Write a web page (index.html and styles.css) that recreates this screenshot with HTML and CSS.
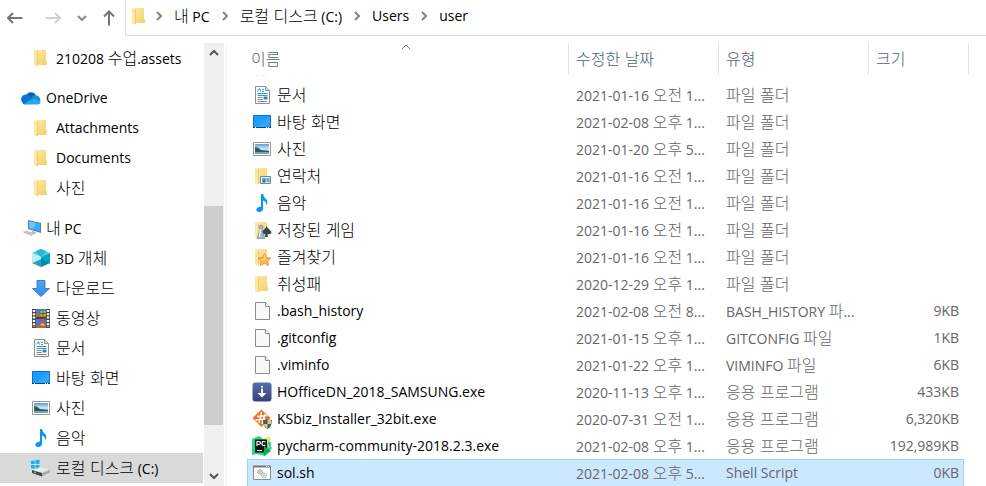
FILE: index.html
```html
<!DOCTYPE html>
<html lang="ko">
<head>
<meta charset="utf-8">
<title>user</title>
<link rel="stylesheet" href="styles.css">
</head>
<body>
<svg class="sprite" aria-hidden="true">
  <defs>
    <linearGradient id="gold" x1="0" x2="1" y1="0" y2="1"><stop offset="0" stop-color="#ffe9a6"/><stop offset="1" stop-color="#f3cf66"/></linearGradient>
    <linearGradient id="sky" x1="0" x2="0" y1="0" y2="1"><stop offset="0" stop-color="#5b9be0"/><stop offset=".5" stop-color="#d4ebf6"/><stop offset="1" stop-color="#4a8a9a"/></linearGradient>
    <linearGradient id="display" x1="0" x2="1" y1="0" y2="1"><stop offset="0" stop-color="#149cff"/><stop offset=".5" stop-color="#1c9ffc"/><stop offset=".7" stop-color="#35acff"/><stop offset="1" stop-color="#1794f4"/></linearGradient>
    <linearGradient id="arrow" x1="0" x2="0" y1="0" y2="1"><stop offset="0" stop-color="#4ba3f0"/><stop offset="1" stop-color="#2f8fe6"/></linearGradient>
    <linearGradient id="navy" x1="0" x2="0" y1="0" y2="1"><stop offset="0" stop-color="#5a6cab"/><stop offset="1" stop-color="#34437f"/></linearGradient>
  </defs>
  <symbol id="folder" viewBox="0 0 20 20">
    <path d="M5 2h10v10.500l.8.500V17H5z" fill="url(#gold)"/>
    <path d="M3 2l4 1.500v13L6.500 19 3 17z" fill="#ffe79c"/>
    <path d="M6.500 3.500V18" stroke="#e9c667" stroke-width=".8"/>
  </symbol>
  <symbol id="cloud" viewBox="0 0 20 20">
    <path d="M5 8a5.500 5.500 0 0 1 10-1l-4 6-8-2z" fill="#0364b8"/>
    <path d="M12 8a5 5 0 0 1 7.500 5l-4 2-6-3z" fill="#1490df"/>
    <path d="M1 14a4.500 4.500 0 0 1 8-5.500l4 2.500-8 5.500a4 4 0 0 1-4-2.500z" fill="#0078d4"/>
    <path d="M3 16l8-5a8 8 0 0 1 3-.5l5.700 3.500a3 3 0 0 1-2.700 2.500H5a5 5 0 0 1-2-.5z" fill="#28a8ea"/>
  </symbol>
  <symbol id="pc" viewBox="0 0 20 20">
    <path d="M7 2l13 3v10L7 11z" fill="#607b8d"/>
    <path d="M8 3.300l11 2.500v7.700L8 10z" fill="#33adff"/>
    <path d="M8 3.300l7 1.600-3 6.300L8 10z" fill="#69c5ff"/>
    <path d="M11 13l4 1v2l-4-1z" fill="#aab4ba"/>
    <path d="M1 14l3-1.500 11 3-4 2.500z" fill="#d2d6da"/>
    <path d="M3 14.500l8 2.300M5 13.500l8 2.300" stroke="#a7adb3" stroke-width=".7"/>
  </symbol>
  <symbol id="cube" viewBox="0 0 20 20">
    <path d="M1 5l9-4 9 4-9 4z" fill="#48cde2"/>
    <path d="M1 5l9 4v10l-9-4z" fill="#9be5ec"/>
    <path d="M10 9l9-4v10l-9 4z" fill="#00a6c7"/>
    <path d="M1 15l9-4 9 4-9 4z" fill="#067f9d" opacity=".7"/>
    <path d="M1 5l9 4v2l-9 4z" fill="#b9f0f3"/>
    <path d="M5 3l5-2 5 2-5 6z" fill="#25b7d2"/>
  </symbol>
  <symbol id="download" viewBox="0 0 20 20">
    <path d="M6 2.500h8v8h4.500L10 18.500 1.500 10.500H6z" fill="url(#arrow)" stroke="#2c78c4" stroke-width=".9"/>
  </symbol>
  <symbol id="video" viewBox="0 0 20 20">
    <path d="M1 1h18v19H1z" fill="#444"/>
    <path d="M5 1h10v8H5zM5 11h10v9H5z" fill="#4279d8"/>
    <path d="M5 6l3-1 2 2h5v2H5zM5 17l4-1 2 1 4-2v5H5z" fill="#b96344"/>
    <circle cx="12" cy="5.500" r="3" fill="#e1bc25"/><path d="M9 5.500h6M12 2.500v6" stroke="#35833a" stroke-width="1.300"/>
    <circle cx="12" cy="12.500" r="2" fill="#e04c31"/><path d="M9 17q3-4 5 1z" fill="#e6cc38"/>
    <path d="M3 2v17M17 2v17" stroke="#fff" stroke-width="2.400" stroke-dasharray="2 1.300"/>
  </symbol>
  <symbol id="doc" viewBox="0 0 20 20">
    <path d="M3.500 1.500h10l4 4v13h-14z" fill="#fff" stroke="#8a8f93"/>
    <path d="M13.500 1.500v4h4" fill="#ddd" stroke="#8a8f93"/>
    <path d="M5.500 6.500l2-3 1 3M10 4.500h2M10 6.500h2M5.500 8.500h10M5.500 10.500h10" stroke="#249bdc" fill="none"/>
    <path d="M5.500 12.500h5M5.500 14.500h5M5.500 16.500h10" stroke="#888"/>
    <path d="M11.500 11.500h4v3h-4z" fill="#3a83ba"/>
  </symbol>
  <symbol id="desktop" viewBox="0 0 20 20">
    <path d="M1.500 3.500h17v12h-17z" fill="url(#display)" stroke="#1473b8"/>
    <path d="M1 15.500h18" stroke="#064a83"/>
    <path d="M3 15.500h1M14 15.500h1M16 15.500h1" stroke="#fff"/>
  </symbol>
  <symbol id="photo" viewBox="0 0 20 20">
    <path d="M1.500 3.500h17v13h-17z" fill="#fff" stroke="#999"/>
    <path d="M3 5h14v10H3z" fill="url(#sky)"/>
    <path d="M3 8q3 0 6 3l8 1v1H3z" fill="#315b55"/>
    <path d="M3 13h14v2H3z" fill="#6fa8bd"/>
  </symbol>
  <symbol id="note" viewBox="0 0 20 20">
    <path d="M9 1h2q.500 3 3 5 2.500 2.500.300 6.500.5-4-3.300-5v8.500q-.3 2.500-3.500 3-3 .2-3.200-2 0-3 4.700-3.500z" fill="#0a94f5"/>
  </symbol>
  <symbol id="drive" viewBox="0 0 20 20">
    <path d="M0 3l3.700-.6v3.700H0zM4.500 2.300L8.500 1.700v4.400h-4zM0 7h3.700v3.700L0 10.200zM4.500 7h4v4.500l-4-.7z" fill="#12b4ee"/>
    <path d="M1 12l8-3 10 2.500-8 3.500z" fill="#e7e9ea"/>
    <path d="M1 12l10 3v3.500L1 15z" fill="#3f4548"/>
    <path d="M11 15l8-3.500v3l-8 4z" fill="#a9adaf"/>
    <path d="M3 14l2 .6" stroke="#50e345" stroke-width="1.500"/>
  </symbol>
  <symbol id="contacts" viewBox="0 0 20 20">
    <use href="#folder"/>
    <path d="M8.500 10.500h10v7h-10z" fill="#d9f1fa" stroke="#5793b2"/>
    <path d="M10.500 12h3v4.500h-3z" fill="#287695"/><circle cx="12" cy="13" r="1" fill="#c68c64"/>
    <path d="M14.500 13h3M14.500 15h3" stroke="#334e5e"/>
  </symbol>
  <symbol id="games" viewBox="0 0 20 20">
    <use href="#folder"/>
    <path d="M14.500 6q.5 1.500 3 3.500 2.500 2 1.500 4-1.500 1.500-3.500.3L16 17h-3l.5-3.200q-3 1-3.500-1.300 0-1.500 2-3 2-1.500 2.500-3.500z" fill="#3c4348"/>
    <path d="M7.500 8.500a2 2 0 1 1 3 0l-.3 2 1.800 5.500 1 2.500H5l1-2.500 2-5.500z" fill="#98bad0" stroke="#5c7d94" stroke-width=".6"/>
    <path d="M8.500 9l-1 8" stroke="#e8f6ff" stroke-width="1.400"/>
  </symbol>
  <symbol id="favorites" viewBox="0 0 20 20">
    <use href="#folder"/>
    <path d="M12.500 6.500l1.800 4 4.700.6-3.400 3 1 4.500-4.100-2.300-4.200 2.300 1-4.500-3.400-3 4.700-.6z" fill="#ffb84b" stroke="#e58b25" stroke-width=".8"/>
    <path d="M12.500 8l.6 4-4.600 1" stroke="#ffe0a0" fill="none"/>
  </symbol>
  <symbol id="file" viewBox="0 0 20 20">
    <path d="M3.500 1.500h10l4 4v13h-14z" fill="#f8f8f8" stroke="#8b8b8b"/>
    <path d="M13.500 1.500v4h4" fill="#fff" stroke="#8b8b8b"/>
  </symbol>
  <symbol id="hoffice" viewBox="0 0 20 20">
    <rect x=".5" y=".5" width="19" height="19" rx="3" fill="url(#navy)"/>
    <path d="M9 4h2v1.500H9zM9 6.500h2V11h3.500L10 15.500 5.500 11H9z" fill="#fff"/>
  </symbol>
  <symbol id="ksbiz" viewBox="0 0 20 20">
    <path d="M9.500.5l9 8.500-9 9-9-9z" fill="#f37021"/>
    <path d="M9.500 3L7 14M13 5l-3 10M5 7.500l10-1M3.500 11l10-1" stroke="#fff" stroke-width="1.300"/>
    <path d="M11 11q3 0 4.500-1.500Q17 11 20 11q0 7-4.500 9Q11 18 11 11z" fill="#24639b"/>
    <path d="M15.500 10Q17 11 19.500 11.500v3.500h-4zM11.500 15h4v4.500q-3-1-4-4.500z" fill="#f8c63d"/>
  </symbol>
  <symbol id="pycharm" viewBox="0 0 20 20">
    <path d="M0 3l7-3 4 3 7-1-1 6 3 4-7 8-8-2-5 1z" fill="#21d789"/>
    <path d="M13 2l4-2 1 6 2 2-3 4z" fill="#fce94f"/><path d="M15 5l4 2-1 5z" fill="#07c3d9"/>
    <path d="M3 3.500h12v13H3z" fill="#111"/>
    <path d="M5 10V5.500h1.500q2 0 2 1.400T6.500 8.500H5M13.500 6q-3.500-1.500-3.500 1.500t3.500 1.500M5 14.500h5" fill="none" stroke="#fff" stroke-width="1.200"/>
    <path d="M12 10l7 5-7 5z" fill="#12a94b"/>
  </symbol>
  <symbol id="script" viewBox="0 0 20 20">
    <path d="M1.500 3.500h17v13h-17z" fill="#fff" stroke="#858b90"/>
    <path d="M1 3.500h18" stroke="#777" stroke-width="2"/><path d="M14 3.500h1M16 3.500h1" stroke="#fff"/>
    <circle cx="8" cy="9" r="2.300" fill="#eee" stroke="#777" stroke-dasharray="1 .4"/><circle cx="8" cy="9" r=".7" fill="#777"/>
    <circle cx="12" cy="12.500" r="2.300" fill="#eaf5fa" stroke="#6c9bb0" stroke-dasharray="1 .4"/><circle cx="12" cy="12.500" r=".7" fill="#6c9bb0"/>
  </symbol>
</svg>

<header class="toolbar">
  <div class="history">
    <button aria-label="뒤로"><svg width="16" height="12" viewBox="0 0 16 12"><path d="M15.500 6H1M6 1L1 6l5 5"/></svg></button>
    <button aria-label="앞으로" disabled><svg width="16" height="12" viewBox="0 0 16 12"><path d="M.5 6H15M10 1l5 5-5 5"/></svg></button>
    <button class="recent" aria-label="최근 위치"><svg width="10" height="6" viewBox="0 0 10 6"><path d="M1 1l4 4 4-4"/></svg></button>
    <button aria-label="위로"><svg width="12" height="16" viewBox="0 0 12 16"><path d="M6 15.500V1.500M1 6.500l5-5 5 5"/></svg></button>
  </div>
  <nav class="address" aria-label="주소">
    <svg class="icon"><use href="#folder"/></svg>
    <svg class="sep" viewBox="0 0 6 10"><path d="M1 1l4 4-4 4"/></svg>
    <a href="#pc"><span class="ko">내</span> PC</a>
    <svg class="sep" viewBox="0 0 6 10"><path d="M1 1l4 4-4 4"/></svg>
    <a href="#c"><span class="ko">로컬 디스크</span> (C:)</a>
    <svg class="sep" viewBox="0 0 6 10"><path d="M1 1l4 4-4 4"/></svg>
    <a href="#users">Users</a>
    <svg class="sep" viewBox="0 0 6 10"><path d="M1 1l4 4-4 4"/></svg>
    <a href="#user">user</a>
  </nav>
</header>

<div class="panes">
  <nav class="tree" aria-label="탐색 창">
    <ul>
      <li><a class="child" href="#t"><svg class="icon"><use href="#folder"/></svg><span>210208 <span class="ko">수업</span>.assets</span></a></li>
    </ul>
    <ul>
      <li><a href="#t"><svg class="icon"><use href="#cloud"/></svg><span>OneDrive</span></a></li>
      <li><a class="child" href="#t"><svg class="icon"><use href="#folder"/></svg><span>Attachments</span></a></li>
      <li><a class="child" href="#t"><svg class="icon"><use href="#folder"/></svg><span>Documents</span></a></li>
      <li><a class="child" href="#t"><svg class="icon"><use href="#folder"/></svg><span class="ko">사진</span></a></li>
    </ul>
    <ul>
      <li><a href="#t"><svg class="icon"><use href="#pc"/></svg><span><span class="ko">내</span> PC</span></a></li>
      <li><a class="child" href="#t"><svg class="icon"><use href="#cube"/></svg><span>3D <span class="ko">개체</span></span></a></li>
      <li><a class="child" href="#t"><svg class="icon"><use href="#download"/></svg><span class="ko">다운로드</span></a></li>
      <li><a class="child" href="#t"><svg class="icon"><use href="#video"/></svg><span class="ko">동영상</span></a></li>
      <li><a class="child" href="#t"><svg class="icon"><use href="#doc"/></svg><span class="ko">문서</span></a></li>
      <li><a class="child" href="#t"><svg class="icon"><use href="#desktop"/></svg><span class="ko">바탕 화면</span></a></li>
      <li><a class="child" href="#t"><svg class="icon"><use href="#photo"/></svg><span class="ko">사진</span></a></li>
      <li><a class="child" href="#t"><svg class="icon"><use href="#note"/></svg><span class="ko">음악</span></a></li>
      <li><a class="child current" href="#t"><svg class="icon"><use href="#drive"/></svg><span><span class="ko">로컬 디스크</span> (C:)</span></a></li>
    </ul>
  </nav>
  <div class="scrollbar">
    <button aria-label="위로 스크롤"><svg width="10" height="8" viewBox="0 0 10 8"><path d="M1 6l4-4 4 4"/></svg></button>
    <div class="track"><div class="thumb"></div></div>
    <button aria-label="아래로 스크롤"><svg width="10" height="8" viewBox="0 0 10 8"><path d="M1 2l4 4 4-4"/></svg></button>
  </div>

  <main class="files">
    <table>
      <colgroup><col class="c-name"><col class="c-mid"><col class="c-mid"><col class="c-size"><col class="c-end"></colgroup>
      <thead>
        <tr>
          <th>이름<svg class="sort" width="10" height="6" viewBox="0 0 10 6"><path d="M1 5l4-4 4 4"/></svg></th>
          <th>수정한 날짜</th><th>유형</th><th>크기</th><td></td>
        </tr>
      </thead>
      <tbody>
        <tr class="clipped"><td colspan="5"><svg width="20" height="6" viewBox="0 0 20 6"><path d="M4 .5h2" stroke="#f3dfb5"/><path d="M10 .5h3" stroke="#dfe3e8"/></svg></td></tr>
        <tr><td><div class="name"><svg class="icon"><use href="#doc"/></svg><span class="ko">문서</span></div></td><td>2021-01-16 <span class="ko">오전</span> 1...</td><td><span class="ko">파일 폴더</span></td><td></td></tr>
        <tr><td><div class="name"><svg class="icon"><use href="#desktop"/></svg><span class="ko">바탕 화면</span></div></td><td>2021-02-08 <span class="ko">오후</span> 1...</td><td><span class="ko">파일 폴더</span></td><td></td></tr>
        <tr><td><div class="name"><svg class="icon"><use href="#photo"/></svg><span class="ko">사진</span></div></td><td>2021-01-20 <span class="ko">오후</span> 5...</td><td><span class="ko">파일 폴더</span></td><td></td></tr>
        <tr><td><div class="name"><svg class="icon"><use href="#contacts"/></svg><span class="ko">연락처</span></div></td><td>2021-01-16 <span class="ko">오전</span> 1...</td><td><span class="ko">파일 폴더</span></td><td></td></tr>
        <tr><td><div class="name"><svg class="icon"><use href="#note"/></svg><span class="ko">음악</span></div></td><td>2021-01-16 <span class="ko">오전</span> 1...</td><td><span class="ko">파일 폴더</span></td><td></td></tr>
        <tr><td><div class="name"><svg class="icon"><use href="#games"/></svg><span class="ko">저장된 게임</span></div></td><td>2021-01-16 <span class="ko">오전</span> 1...</td><td><span class="ko">파일 폴더</span></td><td></td></tr>
        <tr><td><div class="name"><svg class="icon"><use href="#favorites"/></svg><span class="ko">즐겨찾기</span></div></td><td>2021-01-16 <span class="ko">오전</span> 1...</td><td><span class="ko">파일 폴더</span></td><td></td></tr>
        <tr><td><div class="name"><svg class="icon"><use href="#folder"/></svg><span class="ko">취성패</span></div></td><td>2020-12-29 <span class="ko">오후</span> 1...</td><td><span class="ko">파일 폴더</span></td><td></td></tr>
        <tr><td><div class="name"><svg class="icon"><use href="#file"/></svg><span>.bash_history</span></div></td><td>2021-02-08 <span class="ko">오전</span> 8...</td><td>BASH_HISTORY <span class="ko">파</span>...</td><td>9KB</td></tr>
        <tr><td><div class="name"><svg class="icon"><use href="#file"/></svg><span>.gitconfig</span></div></td><td>2021-01-15 <span class="ko">오후</span> 1...</td><td>GITCONFIG <span class="ko">파일</span></td><td>1KB</td></tr>
        <tr><td><div class="name"><svg class="icon"><use href="#file"/></svg><span>.viminfo</span></div></td><td>2021-01-22 <span class="ko">오후</span> 1...</td><td>VIMINFO <span class="ko">파일</span></td><td>6KB</td></tr>
        <tr><td><div class="name"><svg class="icon"><use href="#hoffice"/></svg><span>HOfficeDN_2018_SAMSUNG.exe</span></div></td><td>2020-11-13 <span class="ko">오후</span> 1...</td><td><span class="ko">응용 프로그램</span></td><td>433KB</td></tr>
        <tr><td><div class="name"><svg class="icon"><use href="#ksbiz"/></svg><span>KSbiz_Installer_32bit.exe</span></div></td><td>2020-07-31 <span class="ko">오전</span> 1...</td><td><span class="ko">응용 프로그램</span></td><td>6,320KB</td></tr>
        <tr><td><div class="name"><svg class="icon"><use href="#pycharm"/></svg><span>pycharm-community-2018.2.3.exe</span></div></td><td>2021-02-08 <span class="ko">오후</span> 1...</td><td><span class="ko">응용 프로그램</span></td><td>192,989KB</td></tr>
        <tr class="selected"><td><div class="name"><svg class="icon"><use href="#script"/></svg><span>sol.sh</span></div></td><td>2021-02-08 <span class="ko">오후</span> 5...</td><td>Shell Script</td><td>0KB</td></tr>
      </tbody>
    </table>
  </main>
</div>
</body>
</html>
```

FILE: styles.css
```css
* { box-sizing: border-box; }

body {
  margin: 0;
  height: 100vh;
  display: flex;
  flex-direction: column;
  overflow: hidden;
  background: #fff;
  color: #000;
  font: 14px/20px "Open Sans", "Noto Sans CJK KR", sans-serif;
}

.sprite { position: absolute; width: 0; height: 0; }
.ko { font-family: "Noto Sans CJK KR", sans-serif; font-size: 16px; font-weight: 300; }
.icon { flex: none; width: 20px; height: 20px; }
a { color: inherit; text-decoration: none; }
button { border: 0; padding: 0; background: none; display: flex; align-items: center; justify-content: center; }
button path, .sep path, .sort path { fill: none; }

.toolbar { flex: none; display: flex; height: 36px; }
.history { display: flex; align-items: center; width: 125px; padding-left: 7px; gap: 22px; }
.history path { stroke: #737373; stroke-width: 2; }
.history button:disabled path { stroke: #d2d2d2; }
.history .recent { margin: 0 -6px; }
.history .recent path { stroke: #888; }

.address {
  flex: 1;
  display: flex;
  align-items: center;
  gap: 12px;
  padding-left: 3px;
  padding-bottom: 3px;
  border-left: 1px solid #d9d9d9;
  border-bottom: 1px solid #d9d9d9;
  white-space: nowrap;
}
.address .icon { margin-right: -5px; }
.sep { flex: none; width: 6px; height: 10px; }
.sep path { stroke: #858585; stroke-width: 2; }

.panes { flex: 1; display: flex; min-height: 0; padding-top: 7px; }

.tree { flex: none; width: 204px; }
.tree ul { list-style: none; margin: 0 0 10px; padding: 0; }
.tree a { display: flex; align-items: center; gap: 5px; height: 30px; margin-right: 1px; padding-left: 21px; white-space: nowrap; }
.tree .child { padding-left: 31px; }
.tree .current { background: #d9d9d9; }
.tree a > .ko, .name > .ko { padding-bottom: 2px; }

.scrollbar { flex: none; width: 20px; display: flex; flex-direction: column; background: #f0f0f0; }
.scrollbar button { height: 20px; }
.scrollbar path { stroke: #555; stroke-width: 2; }
.track { flex: 1; padding-top: 143px; }
.thumb { width: 19px; height: 219px; background: #cdcdcd; }

.files { flex: 1; min-width: 0; margin-left: 2px; padding-left: 20px; border-left: 1px solid #f3f3f3; overflow: hidden; }
table { table-layout: fixed; width: 722px; border-collapse: separate; border-spacing: 0; }
.c-name { width: 321px; }
.c-mid { width: 150px; }
.c-size { width: 96px; }
.c-end { width: 5px; }

th {
  position: relative;
  height: 32px;
  padding: 0 7px 2px;
  border-left: 1px solid #e3e3e3;
  color: #4c607a;
  font-family: "Noto Sans CJK KR", sans-serif;
  font-size: 16px;
  font-weight: 300;
  text-align: left;
}
th:first-child { padding-left: 3px; border-left-color: transparent; }
thead td { border-right: 1px solid #e3e3e3; }
.sort { position: absolute; top: 1px; left: 153px; }
.sort path { stroke: #777; }

tbody td { height: 27px; padding: 0 7px; border: 0 solid #99d1ff; color: #666; white-space: nowrap; }
tbody td:first-child { padding: 0 0 0 5px; color: #000; }
tbody td:nth-child(2), tbody td:nth-child(3) { padding: 0 0 0 8px; }
tbody td:nth-child(4) { padding: 0 5px 0 0; text-align: right; }
tbody .clipped td { height: 6px; line-height: 0; }
.name { display: flex; align-items: center; gap: 5px; }

.selected td { background: #cce8ff; border-top-width: 1px; }
.selected td:first-child { border-left-width: 1px; padding-left: 4px; }
.selected td:nth-child(4) { border-right-width: 1px; padding-right: 4px; }
```
